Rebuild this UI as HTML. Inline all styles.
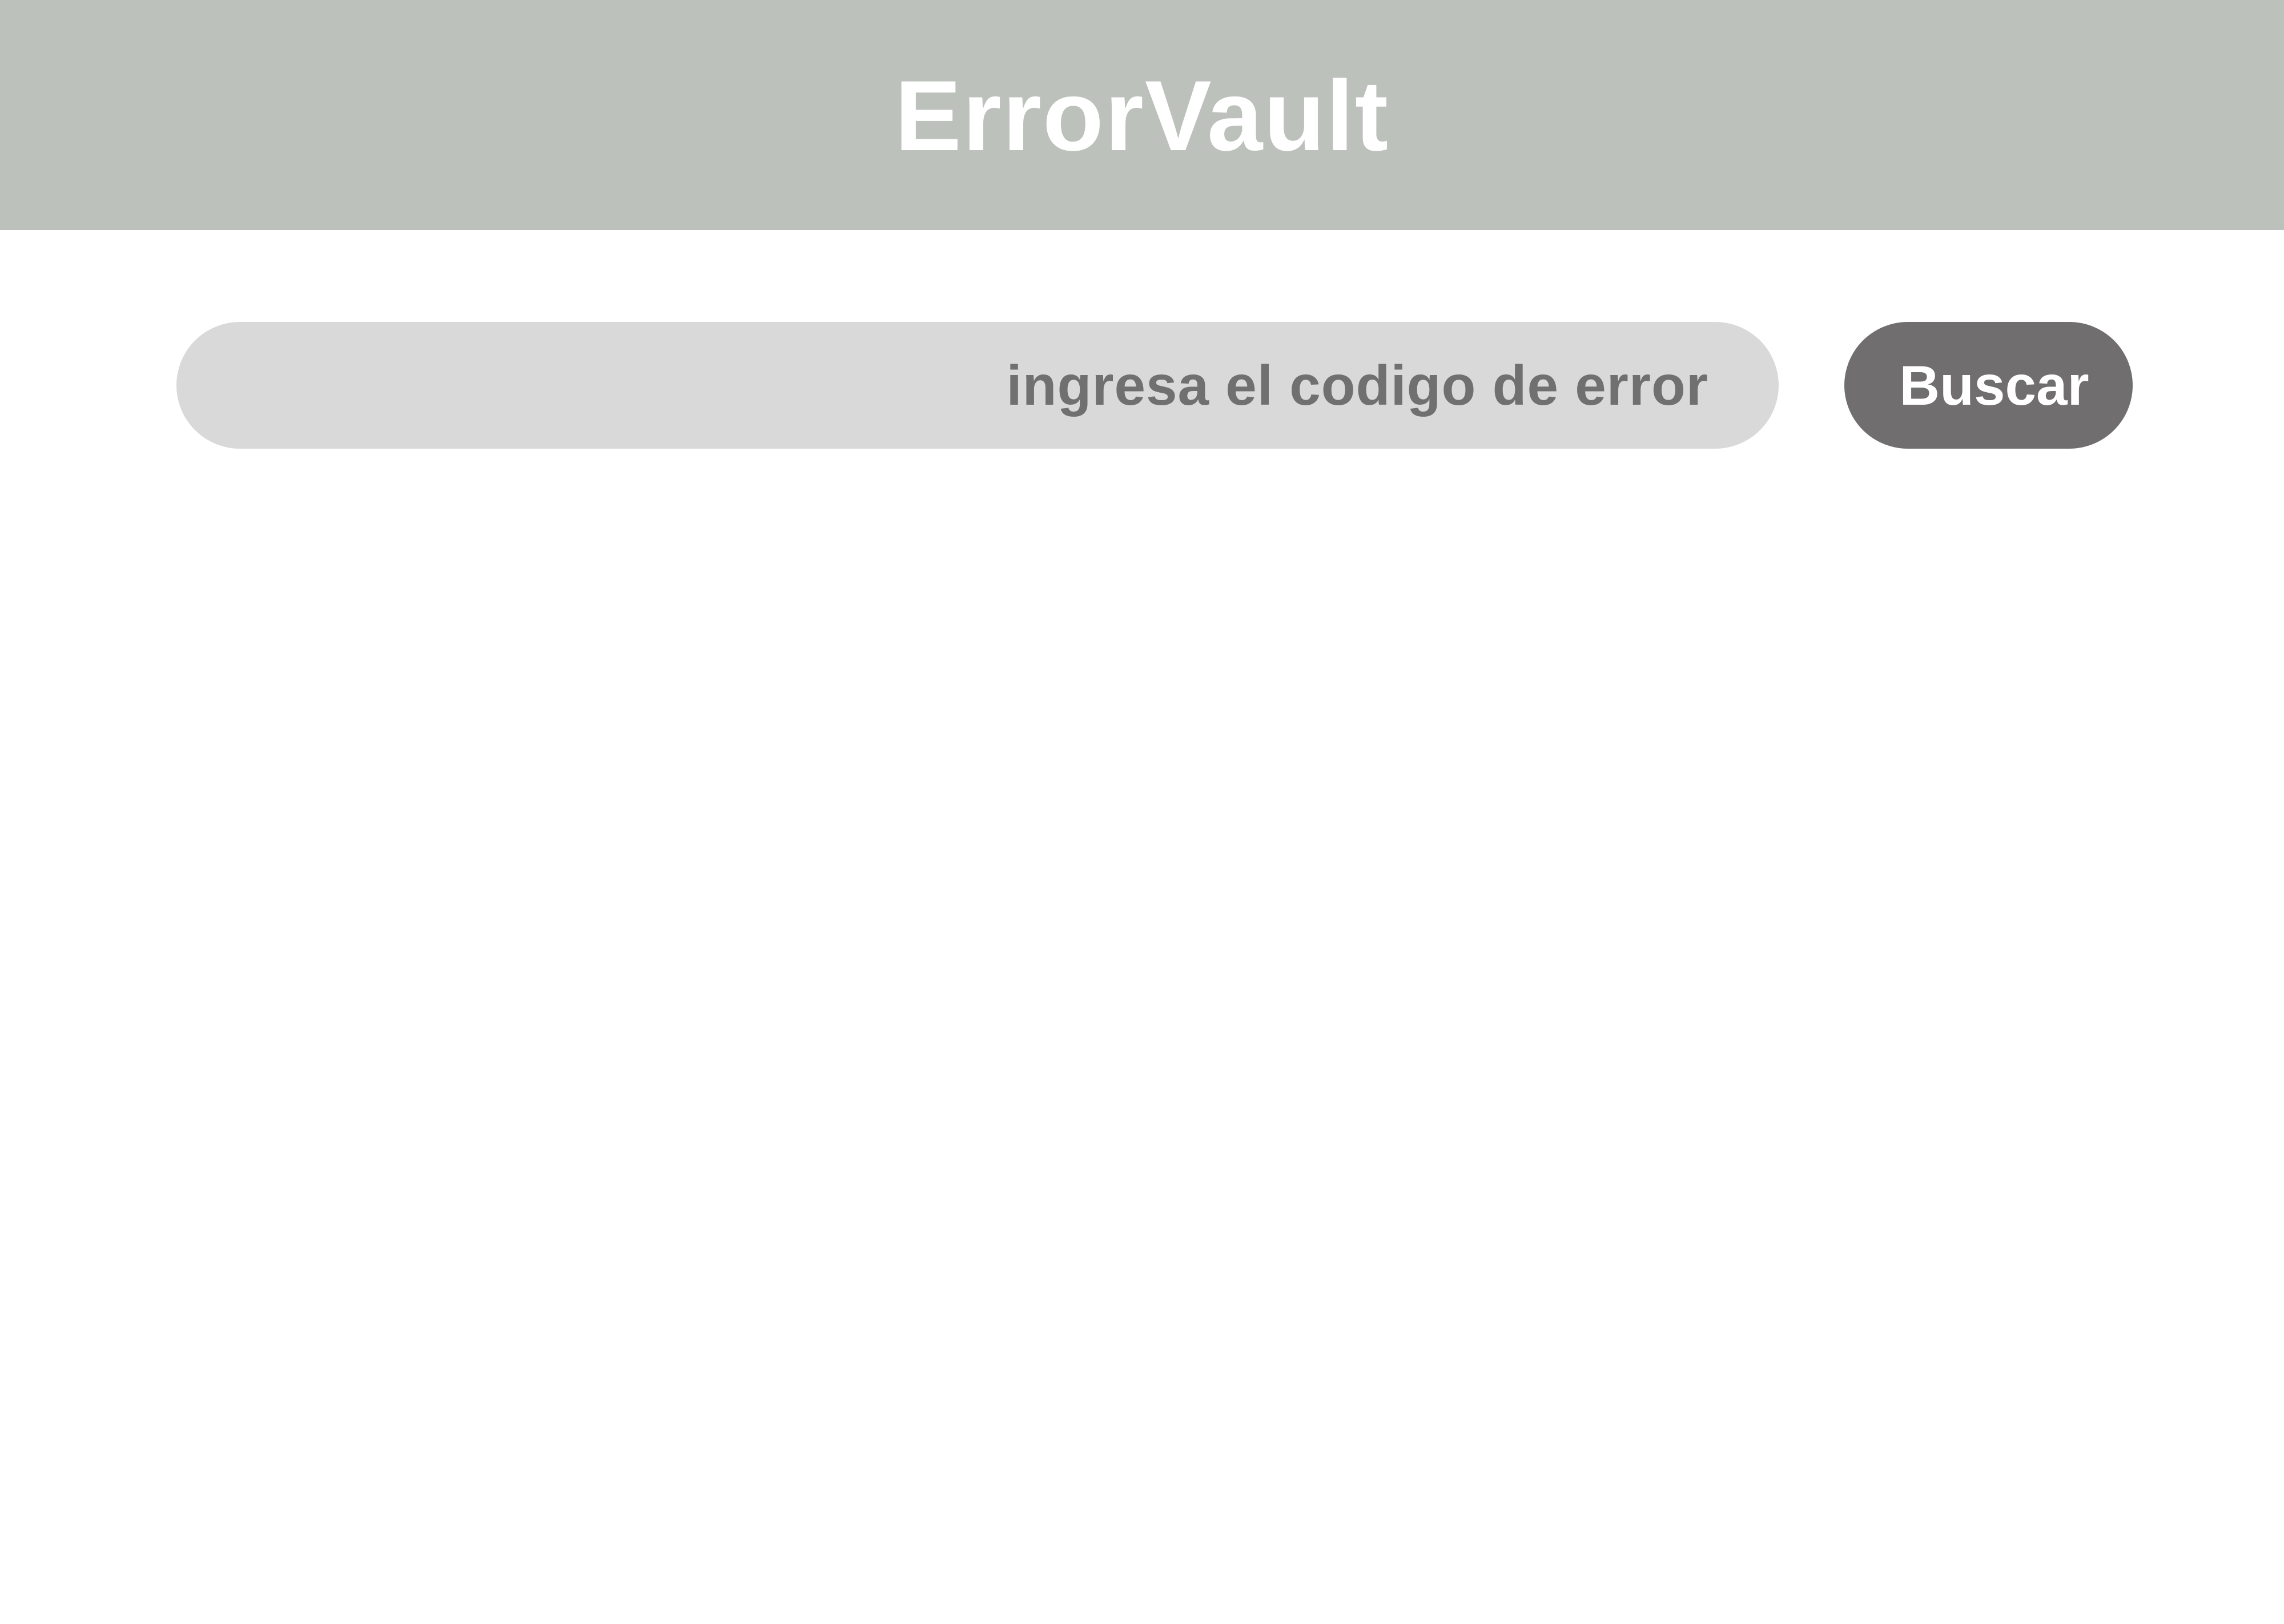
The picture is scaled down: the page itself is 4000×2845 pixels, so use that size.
<!DOCTYPE html>
<html><head><style>
html,body{margin:0;padding:0;width:4000px;height:2845px;background:#fff;overflow:hidden;font-family:"Liberation Sans",Arial,sans-serif;}
.hdr{position:absolute;left:0;top:0;width:4000px;height:403px;background:#bdc1bc;}
.title{position:absolute;left:0;width:4000px;top:104px;text-align:center;color:#fff;font-weight:bold;font-size:175px;line-height:200px;letter-spacing:2px;}
.search{position:absolute;left:309px;top:564px;width:2806px;height:222px;border-radius:111px;background:#d9d9d9;}
.ph{position:absolute;right:123px;top:0;line-height:222px;font-weight:bold;font-size:98px;color:#707070;letter-spacing:1px;}
.btn{position:absolute;left:3230px;top:564px;width:505px;height:222px;border-radius:111px;background:#706e6e;color:#fff;font-weight:bold;font-size:98px;line-height:222px;text-align:center;}
.btn span{position:relative;left:10px;}
</style></head><body>
<div class="hdr"><div class="title">ErrorVault</div></div>
<div class="search"><div class="ph">ingresa el codigo de error</div></div>
<div class="btn"><span>Buscar</span></div>
</body></html>
